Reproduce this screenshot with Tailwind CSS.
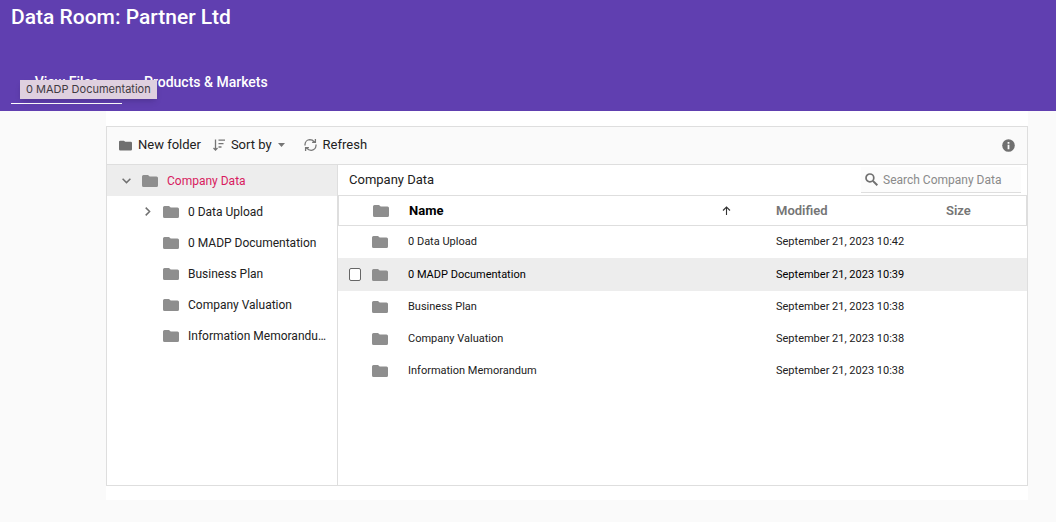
<!DOCTYPE html>
<html lang="en">
<head>
<meta charset="utf-8">
<meta name="viewport" content="width=device-width, initial-scale=1">
<title>Data Room: Partner Ltd</title>
<script src="https://cdn.jsdelivr.net/npm/@tailwindcss/browser@4"></script>
</head>
<body class="min-h-screen bg-[#fafafa] font-[Roboto,sans-serif] text-[13px] leading-4 text-[#212121]">
<svg class="hidden" aria-hidden="true">
  <symbol id="folder" viewBox="0 0 16 12"><path d="M1.5 0H6l1.7 1.5h6.8A1.5 1.5 0 0 1 16 3v7.5a1.5 1.5 0 0 1-1.5 1.5h-13A1.5 1.5 0 0 1 0 10.500v-9A1.500 1.500 0 0 1 1.500 0z"/></symbol>
</svg>

<header class="relative flex h-[111px] flex-col justify-between bg-[#603fb0] pb-[7px] pl-[11px] text-white">
  <h1 class="pt-[5px] text-[21px] leading-6 font-medium">Data Room: Partner Ltd</h1>
  <nav class="flex text-sm leading-5 font-medium">
    <a href="#files" class="flex h-8 w-[111px] justify-center border-b border-white">View Files</a>
    <a href="#products" class="flex h-8 pl-[22px]">Products &amp; Markets</a>
  </nav>
  <div role="tooltip" class="absolute top-[80px] left-[20px] bg-[#dfd0df] px-[6px] py-px text-[11px] leading-[17px] text-[#3f3a42] font-[Inter,sans-serif] shadow-md">0 MADP Documentation</div>
</header>

<main class="mr-[28px] ml-[106px] bg-white pt-[15px] pb-[14px]">
  <section class="flex min-h-[360px] flex-col border border-[#dedede]">
    <div class="flex h-[38px] items-center border-b border-[#dedede] bg-[#fafafa] px-3 pb-px">
      <button class="flex items-center gap-[6px]"><svg class="h-[11px] w-[13px] fill-[#707070]"><use href="#folder"/></svg>New folder</button>
      <button class="ml-3 flex items-center gap-[6px]">
        <svg class="h-3 w-3 fill-none stroke-[#757575]" viewBox="0 0 12 12"><path d="M2.500 .5v10.500M.5 9l2 2 2-2M5.500 1.200H12M5.500 4.600h5M5.500 8h3" stroke-width="1.300"/></svg>Sort by
        <svg class="h-1 w-[7px] fill-[#757575]" viewBox="0 0 7 4"><path d="M0 0h7L3.500 4z"/></svg>
      </button>
      <button class="ml-[19px] flex items-center gap-[6px]">
        <svg class="h-[14px] w-[13px] fill-none stroke-[#757575]" viewBox="0 0 13 14"><path d="M1 7.500V6.500A5 5 0 0 1 5.800 1.700c2 0 3.300.7 4.600 2.200M12 6.500v1A5 5 0 0 1 7.200 12.300c-2 0-3.300-.7-4.600-2.200M11.400 1v3.300H8.100M1.600 13V9.700h3.300" stroke-width="1.300"/></svg>Refresh
      </button>
      <button class="ml-auto" aria-label="Details"><svg class="h-[13px] w-[13px]" viewBox="0 0 13 13"><circle cx="6.500" cy="6.500" r="6.300" fill="#707070"/><path d="M5.600 2.900h1.800v1.800H5.600zM5.600 5.700h1.800v4.500H5.600z" fill="#fafafa"/></svg></button>
    </div>

    <div class="flex flex-1">
      <ul class="w-[231px] shrink-0 border-r border-[#dedede] text-xs" aria-label="Folders">
        <li class="flex h-[31px] items-center bg-[#ededed] pl-[15px] text-[#d81b60]">
          <svg class="mr-[11px] h-[6px] w-[9px] fill-none stroke-[#707070]" viewBox="0 0 9 6"><path d="M.6 .7 4.500 4.600 8.400 .7" stroke-width="1.500"/></svg>
          <svg class="mr-[9px] h-3 w-4 fill-[#8e8e8e]"><use href="#folder"/></svg>Company Data</li>
        <li class="flex h-[31px] items-center pl-[38px]">
          <svg class="mr-[12px] h-[9px] w-[6px] fill-none stroke-[#707070]" viewBox="0 0 6 9"><path d="M.7 .6 4.600 4.500 .7 8.400" stroke-width="1.500"/></svg>
          <svg class="mr-[9px] h-3 w-4 fill-[#8e8e8e]"><use href="#folder"/></svg>0 Data Upload</li>
        <li class="flex h-[31px] items-center pl-[56px]"><svg class="mr-[9px] h-3 w-4 fill-[#8e8e8e]"><use href="#folder"/></svg>0 MADP Documentation</li>
        <li class="flex h-[31px] items-center pl-[56px]"><svg class="mr-[9px] h-3 w-4 fill-[#8e8e8e]"><use href="#folder"/></svg>Business Plan</li>
        <li class="flex h-[31px] items-center pl-[56px]"><svg class="mr-[9px] h-3 w-4 fill-[#8e8e8e]"><use href="#folder"/></svg>Company Valuation</li>
        <li class="flex h-[31px] items-center pr-[11px] pl-[56px]"><svg class="mr-[9px] h-3 w-4 shrink-0 fill-[#8e8e8e]"><use href="#folder"/></svg><span class="min-w-0 truncate">Information Memorandum</span></li>
      </ul>

      <div class="min-w-0 flex-1">
        <div class="flex h-[30px] items-center justify-between pr-[6px] pl-[11px]">
          <span>Company Data</span>
          <label class="flex h-[26px] w-[160px] items-center gap-[5px] border-b border-[#dedede] bg-[#fcfcfc] pl-1">
            <svg class="h-[13px] w-[13px] shrink-0 fill-none stroke-[#707070]" viewBox="0 0 13 13"><circle cx="4.900" cy="4.900" r="3.900" stroke-width="1.700"/><path d="M7.900 7.900l4.400 4.400" stroke-width="2"/></svg>
            <input type="text" aria-label="Search Company Data" placeholder="Search Company Data" class="min-w-0 flex-1 text-xs outline-none placeholder:text-[#8a8a8a]">
          </label>
        </div>
        <table class="w-full table-fixed border-separate border-spacing-0 text-left text-[11px]">
          <colgroup><col class="w-[34px]"><col class="w-[36px]"><col><col class="w-[170px]"><col class="w-[81px]"></colgroup>
          <thead class="text-[13px] text-[#757575]">
            <tr class="h-[31px]">
              <th class="border-y border-l border-[#dedede] p-0"></th>
              <th class="border-y border-[#dedede] p-0"><svg class="ml-px h-3 w-4 fill-[#8e8e8e]" role="img" aria-label="Type"><use href="#folder"/></svg></th>
              <th class="border-y border-[#dedede] p-0 text-black"><div class="flex items-center justify-between pr-[45px] pl-px">Name<svg class="h-[9px] w-[9px] fill-none stroke-[#333]" viewBox="0 0 9 9"><path d="M4.500 9V1M1 4.500 4.500 1 8 4.500" stroke-width="1.100"/></svg></div></th>
              <th class="border-y border-[#dedede] p-0 font-semibold">Modified</th>
              <th class="border-y border-r border-[#dedede] p-0 font-semibold">Size</th>
            </tr>
          </thead>
          <tbody>
            <tr class="h-8"><td class="p-0"></td><td class="p-0"><svg class="h-3 w-4 fill-[#8e8e8e]"><use href="#folder"/></svg></td><td class="p-0">0 Data Upload</td><td class="p-0">September 21, 2023 10:42</td><td class="p-0"></td></tr>
            <tr class="h-[33px] bg-[#ededed] text-black"><td class="p-0 pl-[11px]"><input type="checkbox" aria-label="Select 0 MADP Documentation" class="block h-[13px] w-3 appearance-none rounded-xs border border-[#666] bg-white"></td><td class="p-0"><svg class="h-3 w-4 fill-[#8e8e8e]"><use href="#folder"/></svg></td><td class="p-0">0 MADP Documentation</td><td class="p-0">September 21, 2023 10:39</td><td class="p-0"></td></tr>
            <tr class="h-8"><td class="p-0"></td><td class="p-0"><svg class="h-3 w-4 fill-[#8e8e8e]"><use href="#folder"/></svg></td><td class="p-0">Business Plan</td><td class="p-0">September 21, 2023 10:38</td><td class="p-0"></td></tr>
            <tr class="h-8"><td class="p-0"></td><td class="p-0"><svg class="h-3 w-4 fill-[#8e8e8e]"><use href="#folder"/></svg></td><td class="p-0">Company Valuation</td><td class="p-0">September 21, 2023 10:38</td><td class="p-0"></td></tr>
            <tr class="h-8"><td class="p-0"></td><td class="p-0"><svg class="h-3 w-4 fill-[#8e8e8e]"><use href="#folder"/></svg></td><td class="p-0">Information Memorandum</td><td class="p-0">September 21, 2023 10:38</td><td class="p-0"></td></tr>
          </tbody>
        </table>
      </div>
    </div>
  </section>
</main>
</body>
</html>
